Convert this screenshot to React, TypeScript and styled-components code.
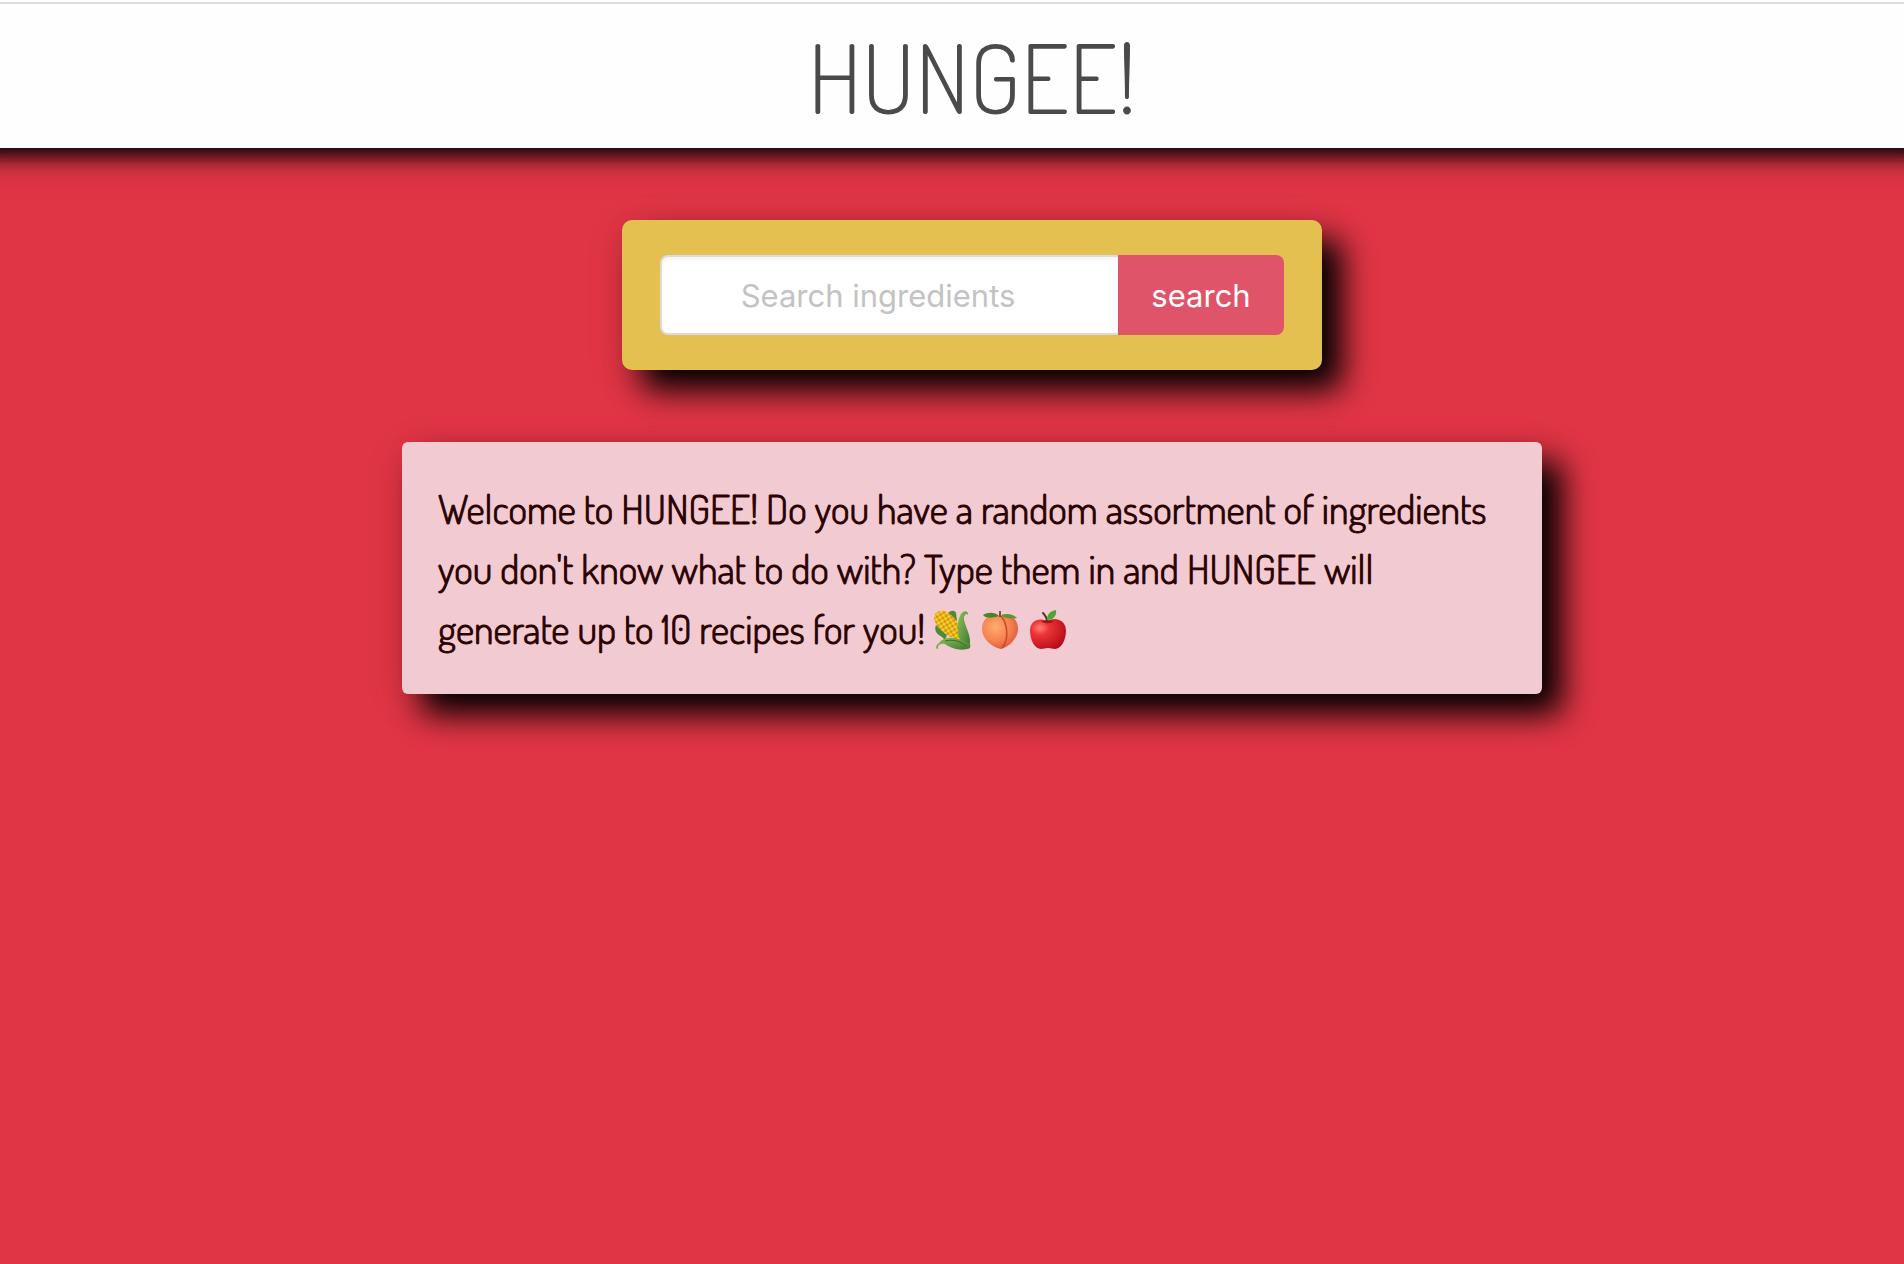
import React, { useState } from "react";
import styled, { createGlobalStyle } from "styled-components";

const GlobalStyle = createGlobalStyle`
  *, *::before, *::after { box-sizing: border-box; }
  body {
    margin: 0;
    background: #e03545;
    font-family: Inter, "Liberation Sans", sans-serif;
  }
`;

const Page = styled.div`
  min-height: 100vh;
  background: #e03545;
`;

const TopBar = styled.div`
  padding-top: 2px;
  background: #fefefe;
`;

const Header = styled.header`
  display: flex;
  justify-content: center;
  padding: 22px 0 22px 40px;
  border-top: 2px solid #dddddd;
  background: #fefefe;
  box-shadow: 0 -22px 20px 30px #000, 0 -28px 40px 40px rgba(0, 0, 0, 0.12);
  clip-path: inset(0 0 -60px 0);
`;

const Title = styled.h1`
  margin: 0;
  color: #4a4a4a;
  font-family: Dosis, "Roboto Condensed", Roboto, sans-serif;
  font-size: 96px;
  font-weight: 300;
  line-height: 100px;
`;

const Main = styled.main`
  display: flex;
  flex-direction: column;
  align-items: center;
  gap: 72px;
  padding: 72px 0 72px 40px;
`;

const SearchCard = styled.form`
  display: flex;
  width: 700px;
  max-width: 100%;
  padding: 35px 38px;
  border-radius: 10px;
  background: #e3c050;
  box-shadow: 20px 20px 32px #000, 0 8px 40px rgba(0, 0, 0, 0.1);
`;

const SearchInput = styled.input`
  flex: 1;
  min-width: 0;
  height: 80px;
  padding: 0 46px 0 22px;
  border: 2px solid #dbdbdb;
  border-right: 0;
  border-radius: 8px 0 0 8px;
  background: #fff;
  box-shadow: inset 0 2px 4px rgba(10, 10, 10, 0.05);
  color: #363636;
  font-family: inherit;
  font-size: 31px;
  text-align: center;
  outline: none;
  &::placeholder { color: #c3c3c3; opacity: 1; }
`;

const SearchButton = styled.button`
  width: 166px;
  border: 0;
  border-radius: 0 8px 8px 0;
  background: #df5469;
  color: #fff;
  font-family: inherit;
  font-size: 31px;
  cursor: pointer;
`;

const Welcome = styled.section`
  width: 1140px;
  max-width: 100%;
  padding: 36px;
  border-radius: 6px;
  background: #f2cad1;
  box-shadow: 20px 20px 32px #000, 0 8px 40px rgba(0, 0, 0, 0.1);
`;

const WelcomeText = styled.p`
  margin: 0;
  color: #280000;
  font-family: Dosis, "Roboto Condensed", Roboto, sans-serif;
  font-size: 40px;
  font-weight: 300;
  line-height: 60px;
  -webkit-text-stroke: 1px #280000;
`;

const Foods = styled.span`
  display: inline-flex;
  gap: 10px;
  vertical-align: -6px;
`;

const Glyph = styled.svg`
  width: 38px;
  height: 40px;
`;

const Corn = () => (
  <Glyph viewBox="0 0 38 40" role="img" aria-label="corn">
    <defs>
      <linearGradient id="leaf" x1="0" y1="0" x2="1" y2="1">
        <stop offset="0" stopColor="#8fbf5c" />
        <stop offset="1" stopColor="#3c7a2c" />
      </linearGradient>
      <pattern id="kernels" width="4" height="4" patternUnits="userSpaceOnUse" patternTransform="rotate(-32)">
        <rect width="4" height="4" fill="#c98a06" />
        <ellipse cx="2" cy="2" rx="1.8" ry="1.7" fill="#fbd22e" />
      </pattern>
    </defs>
    <path d="M15 3c3-3 7-3 8 0l1 8-6-2z" fill="#4f8a3a" />
    <path d="M3 15c-2 5 0 9 6 12l3 3 2-5z" fill="#4f8a3a" />
    <path d="M1 8C1 2 8-1 14 2c7 4 13 13 15 21 1 6-3 9-8 6C13 25 2 17 1 8z" fill="url(#kernels)" />
    <path d="M27 6c2-6 9-6 8-1-1-2-3-1-4 2-1 6 7 17 6 26-1 5-6 5-8 1-5-9-6-20-2-28z" fill="url(#leaf)" />
    <path d="M5 39c-3 0-2-4 1-6 6-8 19-6 31 1 1 3 0 5-3 5-8 2-16-1-22-5-4-1-8 1-7 5z" fill="url(#leaf)" />
    <path d="M12 31c8-2 15 0 21 5" fill="none" stroke="#386f2a" strokeWidth="1" />
  </Glyph>
);

const Peach = () => (
  <Glyph viewBox="0 0 38 40" role="img" aria-label="peach">
    <defs>
      <radialGradient id="peachSkin" cx=".38" cy=".35" r=".7">
        <stop offset="0" stopColor="#ffac70" />
        <stop offset=".6" stopColor="#f5804e" />
        <stop offset="1" stopColor="#d9583c" />
      </radialGradient>
    </defs>
    <path d="M19 6c11-3 18 3 18 13 0 9-9 18-17 20C10 37 1 28 1 19 1 9 9 3 19 6z" fill="url(#peachSkin)" />
    <path d="M20 6c7 8 8 24 1 32" fill="none" stroke="#c94d2a" strokeWidth="1.6" />
    <path d="M18 6C12 8 5 9 2 5c5-3 12-3 16 1z" fill="#4a852b" />
    <path d="M20 5c6-2 12-1 16 3-5 1-12 1-16-3z" fill="#5a9632" />
    <path d="M19 7V1" stroke="#74452b" strokeWidth="1.8" />
  </Glyph>
);

const Apple = () => (
  <Glyph viewBox="0 0 38 40" role="img" aria-label="apple">
    <defs>
      <radialGradient id="appleSkin" cx=".28" cy=".3" r=".8">
        <stop offset="0" stopColor="#ff8078" />
        <stop offset=".3" stopColor="#ee3436" />
        <stop offset="1" stopColor="#b20d18" />
      </radialGradient>
    </defs>
    <path d="M18 11c4-2 8-3 12-1 5 2 7 6 7 11 0 9-5 18-11 18-3 0-4-1-7-1s-4 1-7 1C6 39 1 30 1 21 1 11 9 7 18 11z" fill="url(#appleSkin)" />
    <path d="M12 11c3 3 10 3 13 0-4-1-9-1-13 0z" fill="#a80d18" />
    <path d="M18 12c0-4-1-6-4-9" fill="none" stroke="#5e3420" strokeWidth="2" strokeLinecap="round" />
    <path d="M18 10c0-6 3-9 9-10 1 6-3 10-9 10z" fill="#4aa638" />
  </Glyph>
);

export default function App() {
  const [query, setQuery] = useState("");
  return (
    <Page>
      <GlobalStyle />
      <TopBar>
        <Header>
          <Title>HUNGEE!</Title>
        </Header>
      </TopBar>
      <Main>
        <SearchCard onSubmit={(event) => event.preventDefault()}>
          <SearchInput
            type="text"
            aria-label="Search ingredients"
            placeholder="Search ingredients"
            value={query}
            onChange={(event) => setQuery(event.target.value)}
          />
          <SearchButton type="submit">search</SearchButton>
        </SearchCard>
        <Welcome>
          <WelcomeText>
            Welcome to HUNGEE! Do you have a random assortment of ingredients you don't know what to do with? Type them
            in and HUNGEE will generate up to 10 recipes for you!{" "}
            <Foods>
              <Corn />
              <Peach />
              <Apple />
            </Foods>
          </WelcomeText>
        </Welcome>
      </Main>
    </Page>
  );
}
